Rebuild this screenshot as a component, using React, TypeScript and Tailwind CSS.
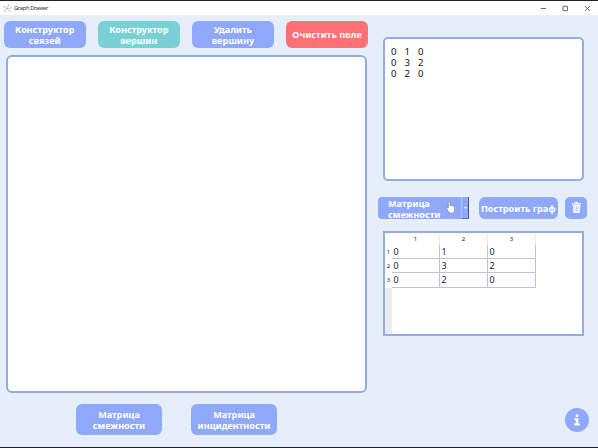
import type { ReactNode } from "react";

const textInput = ["0", "1", "0", "0", "3", "2", "0", "2", "0"];
const matrix = [
  ["0", "1", "0"],
  ["0", "3", "2"],
  ["0", "2", "0"],
];

function Button({ className, children }: { className: string; children: ReactNode }) {
  return (
    <button
      className={`flex shrink-0 items-center justify-center text-center text-[9.1px] leading-[11px] font-bold whitespace-nowrap text-white ${className}`}
    >
      <span>{children}</span>
    </button>
  );
}

function TitleBar() {
  return (
    <header className="flex h-[14px] shrink-0 items-center bg-white pl-[3px] text-[#333]">
      <svg className="h-[8px] w-[9px]" viewBox="0 0 9 8" fill="none">
        <path d="M1 2.5 4 4.5 5.5 1M4 4.5 8 4M4 4.5 1.5 7M4 4.5 7 7" stroke="#a6b0c4" strokeWidth=".6" />
        <g fill="#8a98b4">
          <circle cx="1.1" cy="2.6" r=".6" />
          <circle cx="5.4" cy="1" r=".6" />
          <circle cx="8" cy="3.8" r=".5" />
          <circle cx="1.6" cy="6.9" r=".6" />
          <circle cx="7" cy="7" r=".6" />
          <circle cx="4" cy="4.5" r=".6" />
        </g>
      </svg>
      <span className="ml-[2px] font-['Open_Sans',sans-serif] text-[5.8px] leading-[8px] tracking-[-0.36px] text-[#222]">Graph Drawer</span>
      <svg className="mr-[7px] ml-auto h-[7px] w-[50px]" viewBox="0 0 50 7" fill="none" stroke="#444" strokeWidth=".8">
        <path d="M0 3.5h5" />
        <path d="M22 1.3h4.4v4.4H22z" />
        <path d="m44 1 5 5M49 1l-5 5" />
      </svg>
    </header>
  );
}

function MatrixTable() {
  return (
    <div className="mt-[12px] ml-[5px] flex h-[105px] w-[201px] border-2 border-[#94abe6] bg-white text-[#222]">
      <div className="flex w-[7px] flex-col bg-[#eaebec] text-[6px]">
        <div className="h-[12px] bg-white" />
        {matrix.map((_, i) => (
          <div key={i} className="flex h-[14.2px] items-center justify-center bg-white">
            {i + 1}
          </div>
        ))}
      </div>
      <div>
        <div className="flex h-[12px] pt-px text-[6px]">
          {matrix.map((_, i) => (
            <div key={i} className="flex w-[48px] items-center justify-center border-r border-[#e8e9ee]">
              {i + 1}
            </div>
          ))}
        </div>
        {matrix.map((row, i) => (
          <div key={i} className="flex h-[14.2px] text-[9px] leading-[14px]">
            {row.map((value, j) => (
              <div key={j} className="w-[48px] border-r border-b border-[#bcc3d6] pl-[1.5px]">
                {value}
              </div>
            ))}
          </div>
        ))}
      </div>
    </div>
  );
}

export default function App() {
  return (
    <div className="flex h-[448px] w-[598px] flex-col overflow-hidden border-t border-b border-[#20202e] bg-[#e5eef9] font-['Noto_Sans',sans-serif]">
      <TitleBar />
      <main className="flex flex-1">
        <section className="w-[378px] shrink-0">
          <div className="flex gap-[12.6px] pt-[6px] pl-[4px]">
            <Button className="h-[27px] w-[81.5px] rounded-[6px] bg-[#90a8f9]">Конструктор<br />связей</Button>
            <Button className="h-[27px] w-[81.5px] rounded-[6px] bg-[#79d1d6]">Конструктор<br />вершин</Button>
            <Button className="h-[27px] w-[81.5px] rounded-[6px] bg-[#90a8f9]">Удалить<br />вершину</Button>
            <Button className="h-[27px] w-[81.5px] rounded-[6px] bg-[#fd7074]">Очистить поле</Button>
          </div>
          <div className="mt-[7px] ml-[6px] h-[338px] w-[361px] rounded-[6px] border-2 border-[#94abe0] bg-white" />
          <div className="mt-[11px] ml-[76px] flex gap-[29px]">
            <Button className="h-[31px] w-[86px] rounded-[6px] bg-[#90a8f9]">Матрица<br />смежности</Button>
            <Button className="h-[31px] w-[86px] rounded-[6px] bg-[#90a8f9]">Матрица<br />инцидентности</Button>
          </div>
        </section>
        <section className="flex flex-1 flex-col">
          <div className="mt-[22px] ml-[5px] h-[144px] w-[201px] rounded-[5px] border-2 border-[#94abe6] bg-white pt-[7px] pl-[6px]">
            <div className="grid w-[41px] grid-cols-[13.5px_13.5px_13.5px] text-[9.5px] leading-[11px] text-[#111]">
              {textInput.map((value, i) => (
                <span key={i}>{value}</span>
              ))}
            </div>
          </div>
          <div className="mt-[16px] flex h-[22px]">
            <button className="flex w-[91px] items-center rounded-l-[4px] bg-[#90a8f9] text-left text-[9.1px] leading-[11px] font-bold text-white">
              <span className="w-[62px] shrink-0 pt-px pl-[10px]">Матрица<br />смежности</span>
              <svg className="mt-[-2px] ml-[6px] h-[13px] w-[10px] shrink-0" viewBox="0 0 9 12">
                <path
                  d="M2 1.3c0-1 1.5-1 1.5 0v3c.3-.6 1.3-.5 1.4.2.3-.5 1.3-.3 1.4.4.5-.4 1.5-.1 1.5.7v2.3c0 2-.9 3.4-2.8 3.4-1.4 0-2-.4-2.8-1.6L.7 7.2C.3 6.3 1.2 5.7 2 6.5z"
                  fill="#fff"
                  stroke="#7480a4"
                  strokeWidth=".6"
                />
              </svg>
              <span className="ml-auto flex h-full w-[8px] items-center justify-center border-r border-b border-l border-r-[#46517e] border-b-[#6476ad] border-l-[#b8c7fc]">
                <svg className="h-[2px] w-[3px]" viewBox="0 0 3 2">
                  <path d="M0 0h3L1.5 2z" fill="#fff" />
                </svg>
              </span>
            </button>
            <Button className="ml-[9.5px] h-[22px] w-[79.5px] rounded-[6px] bg-[#90a8f9]">Построить граф</Button>
            <button className="ml-[7px] flex w-[22px] items-center justify-center rounded-[5px] bg-[#90a8f9]">
              <svg className="mb-px h-[11px] w-[9px]" viewBox="0 0 9 11">
                <path d="M0 1.2h2.7L3.2.3h2.6l.5.9H9v1.2H0zM.7 3h7.6l-.5 7.1c0 .5-.4.9-.9.9H2.1c-.5 0-.9-.4-.9-.9z" fill="#fff" />
                <path d="M2.8 4.3v5.2M4.5 4.3v5.2M6.2 4.3v5.2" stroke="#90a8f9" strokeWidth=".6" />
              </svg>
            </button>
          </div>
          <MatrixTable />
          <button className="mt-[72px] ml-[187px] flex h-[24px] w-[24px] items-center justify-center rounded-full bg-[#90a8f9]">
            <svg className="h-[12px] w-[6px]" viewBox="0 0 6 12" fill="#fff">
              <rect x="1.6" y=".3" width="2.7" height="2.7" rx=".7" />
              <path d="M.3 4.2h4.1v5.3h1.4v2H.2v-2h1.5V6H.3z" />
            </svg>
          </button>
        </section>
      </main>
    </div>
  );
}
